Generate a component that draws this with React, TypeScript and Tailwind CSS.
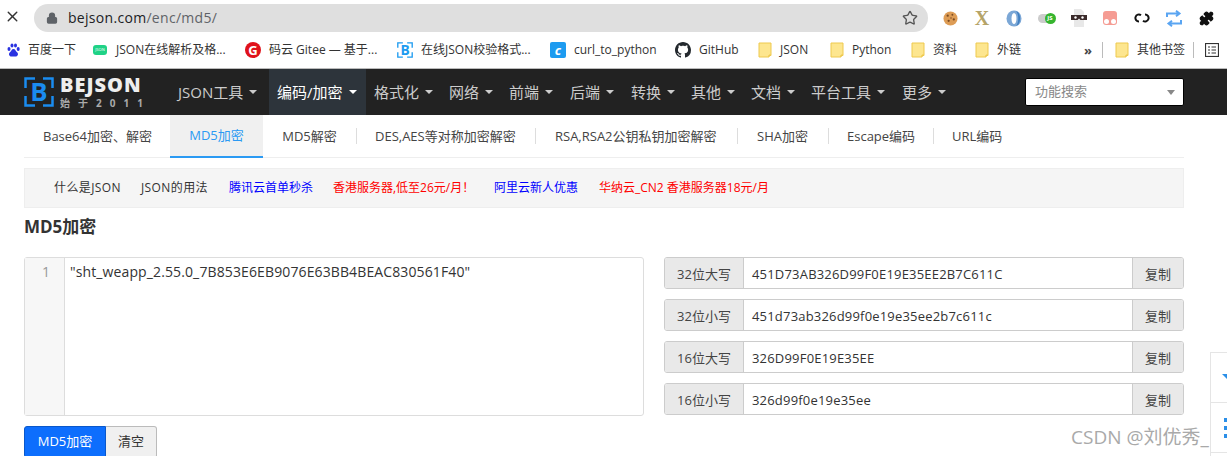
import React from 'react';
import { X, Lock, Star, Puzzle } from 'lucide-react';

const Folder = () => (
  <svg width="14" height="16" viewBox="0 0 14 16" className="shrink-0">
    <path d="M1 1h12v12.500h-2v1.500H1z" fill="#fde68f" stroke="#eec94f" strokeWidth="1" />
    <path d="M11 15v-2h2" fill="none" stroke="#eec94f" />
  </svg>
);

const Baidu = () => (
  <svg width="13" height="14" viewBox="0 0 13 14" className="shrink-0">
    <g fill="#2932e1">
      <ellipse cx="2" cy="6" rx="1.500" ry="2" />
      <ellipse cx="5" cy="2.500" rx="1.500" ry="2" />
      <ellipse cx="8.500" cy="2.500" rx="1.500" ry="2" />
      <ellipse cx="11.200" cy="6" rx="1.500" ry="2" />
      <path d="M6.500 6C4.500 6 4.500 8 3 9.200 1.200 10.500 2 13.500 4.500 13.500h4C11 13.500 11.800 10.500 10 9.200 8.500 8 8.500 6 6.500 6z" />
    </g>
  </svg>
);

const JsonBadge = () => (
  <div className="flex h-[10px] w-[14px] shrink-0 items-center justify-center rounded-[3px] bg-[#1fd286]">
    <span className="text-[4px] leading-none text-white">JSON</span>
  </div>
);

const Gitee = () => (
  <div className="flex h-[16px] w-[16px] shrink-0 items-center justify-center rounded-full bg-[#e0121a]">
    <span className="text-[13px] leading-none font-bold text-white">G</span>
  </div>
);

const BracketB = ({ size, color }: { size: number; color: string }) => (
  <div className="relative flex shrink-0 items-center justify-center" style={{ width: size, height: size }}>
    <svg viewBox="0 0 30 30" className="absolute inset-0 h-full w-full" fill="none" stroke={color} strokeWidth="2.500">
      <path d="M11 1.500H1.500V11M19 1.500h9.500V11M1.500 19v9.500H11M28.500 19v9.500H19" />
    </svg>
    <span className="leading-none font-bold" style={{ color, fontSize: size * 0.86 }}>B</span>
  </div>
);

const CurlIcon = () => (
  <div className="flex h-[16px] w-[16px] shrink-0 items-center justify-center rounded-[2px] bg-[#1d9bf0]">
    <span className="text-[13px] leading-none font-bold text-white italic">c</span>
  </div>
);

const GithubIcon = () => (
  <svg width="16" height="16" viewBox="0 0 16 16" fill="#24292e" className="shrink-0">
    <path d="M8 0C3.580 0 0 3.580 0 8c0 3.540 2.290 6.530 5.470 7.590.4.070.55-.17.55-.38 0-.19-.01-.82-.01-1.490-2.010.37-2.530-.49-2.690-.94-.09-.23-.48-.94-.82-1.130-.28-.15-.68-.52-.01-.53.63-.01 1.080.58 1.230.82.720 1.210 1.870.870 2.330.660.070-.520.280-.870.510-1.070-1.780-.200-3.640-.890-3.640-3.950 0-.870.310-1.590.820-2.150-.080-.200-.360-1.020.080-2.120 0 0 .670-.210 2.200.820.640-.180 1.320-.270 2-.270s1.360.090 2 .270c1.530-1.040 2.200-.820 2.200-.820.440 1.100.160 1.920.080 2.120.510.560.820 1.270.820 2.150 0 3.070-1.870 3.750-3.650 3.950.290.250.540.730.540 1.480 0 1.070-.010 1.930-.010 2.200 0 .210.150.460.550.380A8.010 8.010 0 0 0 16 8c0-4.420-3.580-8-8-8z" />
  </svg>
);

const Cookie = () => (
  <svg width="15" height="15" viewBox="0 0 16 16">
    <circle cx="8" cy="8" r="7.500" fill="#dd9c55" />
    <g fill="#7a4a22">
      <circle cx="5" cy="5" r="1.200" />
      <circle cx="10" cy="4" r="1" />
      <circle cx="11.500" cy="9" r="1.200" />
      <circle cx="6" cy="10.500" r="1.200" />
      <circle cx="8.500" cy="7.500" r=".8" />
    </g>
  </svg>
);

const Ring = () => (
  <svg width="16" height="17" viewBox="0 0 16 17">
    <ellipse cx="8" cy="8.500" rx="7.500" ry="8" fill="#7ba7d6" />
    <ellipse cx="8" cy="8.500" rx="2.500" ry="5.500" fill="#fff" />
    <path d="M10 1C13 4 13 13 10 16 15.500 14.500 15.500 2.500 10 1z" fill="#3f7fc1" />
  </svg>
);

const JsToggle = () => (
  <div className="relative h-[15px] w-[18px]">
    <div className="absolute top-[3px] left-0 h-[9px] w-[14px] rounded-full bg-[#ccc]" />
    <div className="absolute top-0 right-0 flex h-[11px] w-[11px] translate-y-[2px] items-center justify-center rounded-full bg-[#36b52f]">
      <span className="text-[6px] leading-none font-bold text-white">JS</span>
    </div>
  </div>
);

const Mask = () => (
  <svg width="16" height="18" viewBox="0 0 16 18">
    <path d="M3 0h7l3 3v15H3z" fill="#e8e8e8" />
    <path d="M0 6h16v5H9.500L8 9.500 6.500 11H0z" fill="#3a2a2a" />
    <circle cx="4.500" cy="8.500" r="1.200" fill="#fff" />
    <circle cx="11.500" cy="8.500" r="1.200" fill="#fff" />
  </svg>
);

const PinkDots = () => (
  <div className="relative h-[14px] w-[14px] rounded-[3px] bg-[#f59c93]">
    <div className="absolute bottom-[1px] left-[1px] h-[5px] w-[5px] rounded-full bg-white" />
    <div className="absolute right-[1px] bottom-[1px] h-[5px] w-[5px] rounded-full bg-white" />
  </div>
);

const LinkLoop = () => (
  <svg width="16" height="12" viewBox="0 0 16 12" fill="none" stroke="#111" strokeWidth="2">
    <path d="M7 3.200A3.500 3.500 0 1 0 5 9.500M9 8.800A3.500 3.500 0 1 0 11 2.500" />
  </svg>
);

const SyncSquare = () => (
  <svg width="16" height="17" viewBox="0 0 16 17" fill="none" stroke="#5aa5f2" strokeWidth="2">
    <path d="M1 7V3.500h12M10 0.800l3.500 2.700L10 6.200M15 10v3.500H3M6 10.800l-3.500 2.700L6 16.200" />
  </svg>
);

const GridIcon = () => (
  <svg width="14" height="14" viewBox="0 0 14 14" fill="none" stroke="#333">
    <rect x=".5" y=".5" width="13" height="13" strokeWidth="1.200" />
    <path d="M3 4h2M6.500 4H11M3 7h2M6.500 7H11M3 10h2M6.500 10H11" />
  </svg>
);

const Caret = () => <span className="ml-[6px] h-0 w-0 border-x-[4px] border-t-[4px] border-x-transparent border-t-current" />;

const bookmarks = [
  { icon: <Baidu />, label: '百度一下', box: 'w-[93px] pl-[7px] gap-[8px]' },
  { icon: <JsonBadge />, label: 'JSON在线解析及格...', box: 'w-[152px] gap-[9px]' },
  { icon: <Gitee />, label: '码云 Gitee — 基于...', box: 'w-[152px] gap-[8px]' },
  { icon: <BracketB size={16} color="#1d9bf0" />, label: '在线JSON校验格式...', box: 'w-[153px] gap-[8px]' },
  { icon: <CurlIcon />, label: 'curl_to_python', box: 'w-[125px] gap-[8px]' },
  { icon: <GithubIcon />, label: 'GitHub', box: 'w-[83px] gap-[8px]' },
  { icon: <Folder />, label: 'JSON', box: 'w-[72px] gap-[8px]' },
  { icon: <Folder />, label: 'Python', box: 'w-[81px] gap-[8px]' },
  { icon: <Folder />, label: '资料', box: 'w-[64px] gap-[8px]' },
  { icon: <Folder />, label: '外链', box: 'w-[109px] gap-[8px]' },
];

const navItems = [
  { label: 'JSON工具', box: 'w-[99px]' },
  { label: '编码/加密', box: 'w-[97px] bg-[#2d343b] text-white' },
  { label: '格式化', box: 'w-[75px]' },
  { label: '网络', box: 'w-[60px]' },
  { label: '前端', box: 'w-[61px]' },
  { label: '后端', box: 'w-[61px]' },
  { label: '转换', box: 'w-[60px]' },
  { label: '其他', box: 'w-[60px]' },
  { label: '文档', box: 'w-[60px]' },
  { label: '平台工具', box: 'w-[91px]' },
  { label: '更多', box: 'w-[60px]' },
];

const tabs = [
  { label: 'Base64加密、解密', box: 'w-[146px] pl-[19px]' },
  { label: 'MD5加密', box: 'w-[93px] justify-center bg-[#f0f0f0] text-[#2b9af3] border-b-2 border-[#2b9af3]' },
  { label: 'MD5解密', box: 'w-[93px] justify-center' },
  { label: 'DES,AES等对称加密解密', box: 'w-[179px] pl-[19px]', sep: true },
  { label: 'RSA,RSA2公钥私钥加密解密', box: 'w-[202px] pl-[20px]', sep: true },
  { label: 'SHA加密', box: 'w-[91px] pl-[20px]', sep: true },
  { label: 'Escape编码', box: 'w-[105px] pl-[19px]', sep: true },
  { label: 'URL编码', box: 'w-[88px] pl-[19px]', sep: true },
];

const links = [
  { label: '什么是JSON', box: 'w-[87px] text-[#333] tracking-[0.4px]' },
  { label: 'JSON的用法', box: 'w-[88px] text-[#333] tracking-[0.4px]' },
  { label: '腾讯云首单秒杀', box: 'w-[104px] text-[#0000ff]' },
  { label: '香港服务器,低至26元/月！', box: 'w-[161px] text-[#ff0000]' },
  { label: '阿里云新人优惠', box: 'w-[105px] text-[#0000ff]' },
  { label: '华纳云_CN2 香港服务器18元/月', box: 'w-[180px] text-[#ff0000]' },
];

const results = [
  { label: '32位大写', value: '451D73AB326D99F0E19E35EE2B7C611C' },
  { label: '32位小写', value: '451d73ab326d99f0e19e35ee2b7c611c' },
  { label: '16位大写', value: '326D99F0E19E35EE' },
  { label: '16位小写', value: '326d99f0e19e35ee' },
];

const App: React.FC = () => {
  return (
    <div className="relative flex h-[456px] w-[1227px] flex-col overflow-hidden bg-white font-['Open_Sans','Noto_Sans_CJK_SC',sans-serif] text-[#333]">
      {/* browser toolbar */}
      <div className="flex h-[32px] shrink-0 items-end">
        <div className="flex h-[28px] w-[34px] items-center pl-[4px]">
          <X size={17} strokeWidth={2} className="-mt-[4px] text-[#333]" />
        </div>
        <div className="flex h-[28px] w-[894px] items-center rounded-full bg-[#dfdfdf] pr-[10px] pl-[12px]">
          <Lock size={12} fill="#5f6368" stroke="#5f6368" strokeWidth={2.500} />
          <span className="ml-[10px] text-[14px] leading-none tracking-[0.3px] text-[#202124]">
            bejson.com<span className="text-[#5f6368]">/enc/md5/</span>
          </span>
          <Star size={16} className="ml-auto text-[#555]" />
        </div>
        <div className="ml-[6px] flex h-[28px] flex-1 items-center">
          <div className="flex w-[32px] justify-center"><Cookie /></div>
          <div className="flex w-[32px] justify-center">
            <span className="font-['Liberation_Serif',serif] text-[20px] leading-none font-bold text-[#b5a468]">X</span>
          </div>
          <div className="flex w-[32px] justify-center"><Ring /></div>
          <div className="flex w-[33px] justify-center"><JsToggle /></div>
          <div className="flex w-[31px] justify-center"><Mask /></div>
          <div className="flex w-[32px] justify-center"><PinkDots /></div>
          <div className="flex w-[32px] justify-center"><LinkLoop /></div>
          <div className="flex w-[32px] justify-center"><SyncSquare /></div>
          <div className="flex w-[32px] justify-center"><Puzzle size={15} fill="#111" className="text-[#111]" /></div>
        </div>
      </div>

      {/* bookmarks */}
      <div className="flex h-[37px] shrink-0 items-center border-b border-[#bbb] text-[12px] text-[#333]">
        {bookmarks.map((b) => (
          <div key={b.label} className={`flex shrink-0 items-center whitespace-nowrap ${b.box}`}>
            {b.icon}
            <span>{b.label}</span>
          </div>
        ))}
        <span className="w-[18px] shrink-0 text-[13px] leading-none font-bold text-[#444]">»</span>
        <div className="h-[16px] w-px bg-[#bbb]" />
        <div className="ml-[12px] flex w-[81px] items-center gap-[8px] whitespace-nowrap">
          <Folder />
          <span>其他书签</span>
        </div>
        <div className="ml-[-3px] h-[16px] w-px bg-[#bbb]" />
        <div className="ml-[11px]"><GridIcon /></div>
      </div>

      {/* site nav */}
      <div className="flex h-[46px] shrink-0 items-stretch bg-[#222] px-[24px] text-[15px] text-[#ccc]">
        <div className="flex w-[146px] shrink-0 items-center gap-[6px]">
          <BracketB size={30} color="#1a8cf0" />
          <div className="flex flex-col whitespace-nowrap">
            <span className="text-[20px] leading-[16px] font-extrabold tracking-[1px] text-[#eee]">BEJSON</span>
            <span className="mt-[5px] text-[10px] leading-[10px] font-bold tracking-[8px] text-[#aaa]">始于2011</span>
          </div>
        </div>
        {navItems.map((n) => (
          <div key={n.label} className={`flex shrink-0 items-center pl-[8px] whitespace-nowrap ${n.box}`}>
            <span>{n.label}</span>
            <Caret />
          </div>
        ))}
        <div className="ml-[71px] flex h-[28px] w-[159px] shrink-0 items-center self-center rounded-[2px] border border-black bg-white pr-[8px] pl-[9px] text-[13px] text-[#888]">
          <span>功能搜索</span>
          <span className="ml-auto h-0 w-0 border-x-[4px] border-t-[5px] border-x-transparent border-t-[#888]" />
        </div>
      </div>

      {/* content */}
      <div className="ml-[24px] flex w-[1160px] flex-col">
        <div className="flex h-[43px] shrink-0 border-b border-[#eee] text-[13px] text-[#444]">
          {tabs.map((t) => (
            <div key={t.label} className={`relative flex h-[43px] shrink-0 items-center whitespace-nowrap ${t.box}`}>
              {t.sep && <span className="absolute top-[13px] left-0 h-[16px] w-px bg-[#ddd]" />}
              {t.label}
            </div>
          ))}
        </div>

        <div className="mt-[10px] flex h-[40px] items-center border border-[#eee] bg-[#f5f5f5] pl-[29px] text-[12px]">
          {links.map((l) => (
            <span key={l.label} className={`shrink-0 whitespace-pre ${l.box}`}>{l.label}</span>
          ))}
        </div>

        <h1 className="h-[49px] text-[17px] leading-[38px] font-bold text-[#333]">MD5加密</h1>

        <div className="flex gap-[20px]">
          <div className="flex h-[159px] w-[620px] rounded-[3px] border border-[#ddd]">
            <div className="w-[40px] border-r border-[#ddd] bg-[#f7f7f7] pt-[4px] pl-[17px] text-[14px] leading-[20px] text-[#999]">1</div>
            <div className="pt-[4px] pl-[5px] text-[14px] leading-[20px] tracking-[0.12px] text-[#333]">"sht_weapp_2.55.0_7B853E6EB9076E63BB4BEAC830561F40"</div>
          </div>
          <div className="flex w-[520px] flex-col gap-[10px]">
            {results.map((r) => (
              <div key={r.label} className="flex h-[32px] overflow-hidden rounded-[3px] border border-[#ccc] text-[13px]">
                <div className="flex w-[79px] shrink-0 items-center justify-center border-r border-[#ccc] bg-[#e9e9e9] pt-[3px] text-[#444]">{r.label}</div>
                <div className="flex flex-1 items-center pt-[3px] pl-[8px] tracking-[0.19px] text-[#333]">{r.value}</div>
                <div className="flex w-[51px] shrink-0 items-center justify-center border-l border-[#ccc] bg-[#e9e9e9] pt-[3px] text-[#444]">复制</div>
              </div>
            ))}
          </div>
        </div>

        <div className="mt-[10px] flex h-[32px] text-[13px]">
          <div className="flex w-[82px] items-center justify-center rounded-l-[3px] border border-[#0a58ca] bg-[#0d6efd] text-white">MD5加密</div>
          <div className="flex w-[51px] items-center justify-center rounded-r-[3px] border border-l-0 border-[#bbb] bg-[#f0f0f0] text-[#333]">清空</div>
        </div>
      </div>

      {/* floating side widget */}
      <div className="absolute top-[352px] right-0 h-[104px] w-[17px] overflow-hidden border-t border-l border-[#e5e5e5] bg-white">
        <div className="h-[50px] border-b border-[#e5e5e5] pt-[21px] pl-[11px]">
          <span className="block h-0 w-0 border-x-[6px] border-t-[6px] border-x-transparent border-t-[#2b8fe8]" />
        </div>
        <div className="flex h-[50px] flex-col gap-[4px] border-b border-[#e5e5e5] pt-[15px] pl-[13px]">
          <span className="h-[4px] w-[4px] shrink-0 bg-[#2b8fe8]" />
          <span className="h-[4px] w-[4px] shrink-0 bg-[#2b8fe8]" />
          <span className="h-[4px] w-[4px] shrink-0 bg-[#2b8fe8]" />
        </div>
      </div>

      {/* watermark */}
      <span className="absolute top-[425px] left-[1071px] text-[19px] leading-[24px] whitespace-nowrap text-[#a9a9a9]">CSDN @刘优秀_</span>
    </div>
  );
};

export default App;
